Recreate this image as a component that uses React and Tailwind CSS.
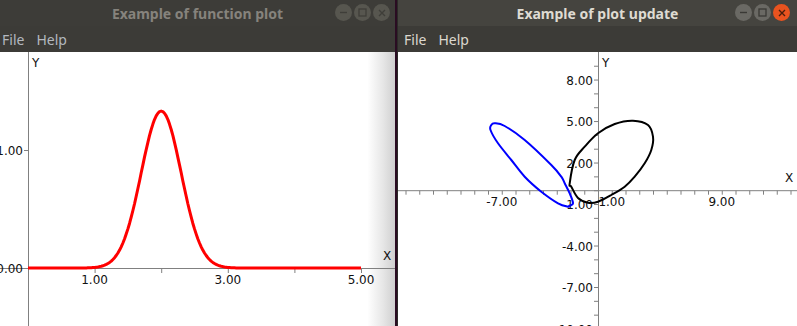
import React from 'react';

// closed Catmull-Rom spline through the given points
const smoothPath = (pts) => {
    const n = pts.length;
    let d = `M${pts[0][0]},${pts[0][1]}`;
    for (let i = 0; i < n; i++) {
        const p0 = pts[(i - 1 + n) % n];
        const p1 = pts[i];
        const p2 = pts[(i + 1) % n];
        const p3 = pts[(i + 2) % n];
        const c1 = [p1[0] + (p2[0] - p0[0]) / 6, p1[1] + (p2[1] - p0[1]) / 6];
        const c2 = [p2[0] - (p3[0] - p1[0]) / 6, p2[1] - (p3[1] - p1[1]) / 6];
        d += ` C${c1[0].toFixed(1)},${c1[1].toFixed(1)} ${c2[0].toFixed(1)},${c2[1].toFixed(1)} ${p2[0]},${p2[1]}`;
    }
    return d + 'Z';
};

const blackLoop = [
    [171.7, 131.3], [176.7, 108], [186.7, 94.7], [200, 81.3], [216.7, 72], [235, 68.7],
    [250, 73], [255, 84.7], [253.3, 98], [246.7, 111.3], [236.7, 124.7], [226.7, 134.7],
    [213.3, 143], [200, 149.7], [190, 150.7], [180, 146], [173.3, 134.7],
];

const blueLoop = [
    [171, 154], [175, 151.3], [171.7, 141.3], [166.7, 131.3], [163.3, 124.7], [153.3, 113],
    [126.7, 88], [106.7, 74], [96.7, 71.3], [93.3, 73], [92.5, 78], [100, 91.3],
    [113.3, 108], [126.7, 124.7], [143.3, 139.7], [160, 151.3], [170, 154.7],
];

const WindowButtons = ({ active }) => {
    const grey = active ? 'bg-[#6a6964]' : 'bg-[#57564f]';
    const glyph = active ? '#3a3935' : '#3f3e39';
    return (
        <div className="flex items-center gap-[2px]">
            <div className={`w-[17px] h-[17px] rounded-full ${grey} flex items-center justify-center`}>
                <svg width="9" height="9" viewBox="0 0 9 9"><line x1="1" y1="4.5" x2="8" y2="4.5" stroke={glyph} strokeWidth="1.4" /></svg>
            </div>
            <div className={`w-[17px] h-[17px] rounded-full ${grey} flex items-center justify-center`}>
                <svg width="9" height="9" viewBox="0 0 9 9"><rect x="1" y="1" width="7" height="7" fill="none" stroke={glyph} strokeWidth="1.3" /></svg>
            </div>
            <div className={`w-[17px] h-[17px] rounded-full ${active ? 'bg-[#e9531f]' : grey} flex items-center justify-center`}>
                <svg width="8" height="8" viewBox="0 0 8 8">
                    <path d="M1 1L7 7M7 1L1 7" stroke={active ? '#4a1d0b' : glyph} strokeWidth="1.4" />
                </svg>
            </div>
        </div>
    );
};

const TitleBar = ({ title, active, padRight }) => (
    <div className={`relative h-[26px] flex items-center justify-center ${active ? 'bg-[#45443f]' : 'bg-[#3d3c38]'}`}>
        <span
            className={`text-[14px] font-bold ${active ? 'text-[#dfdbd2]' : 'text-[#86837d]'}`}
            style={{ fontFamily: '"Noto Sans", sans-serif' }}
        >
            {title}
        </span>
        <div className={`absolute top-[4px] ${padRight}`}>
            <WindowButtons active={active} />
        </div>
    </div>
);

const MenuBar = ({ active, padLeft }) => (
    <div
        className={`h-[26px] flex items-center gap-[12px] text-[14px] bg-[#3c3b37] ${padLeft} ${active ? 'text-[#dcd8cf]' : 'text-[#b3b8bf]'}`}
        style={{ fontFamily: '"Noto Sans", sans-serif' }}
    >
        <span>File</span>
        <span>Help</span>
    </div>
);

const FunctionPlot = () => {
    const pts = [];
    for (let i = 0; i <= 200; i++) {
        const x = (i / 200) * 5;
        const f = Math.exp(-((x - 2) ** 2) / (2 * 0.09)) / (0.3 * Math.sqrt(2 * Math.PI));
        pts.push(`${(28 + x * 66.6).toFixed(1)},${(216 - f * 118).toFixed(1)}`);
    }
    const xTicks = [1, 2, 3, 4, 5];
    return (
        <svg width="395" height="274" className="block" style={{ fontFamily: '"DejaVu Sans", sans-serif' }}>
            <line x1="28.5" y1="0" x2="28.5" y2="274" stroke="#808080" />
            <line x1="0" y1="216.5" x2="395" y2="216.5" stroke="#808080" />
            {xTicks.map((t) => (
                <line key={t} x1={28.5 + t * 66.6} y1="216" x2={28.5 + t * 66.6} y2="221" stroke="#808080" />
            ))}
            <line x1="24" y1="98.5" x2="28" y2="98.5" stroke="#808080" />
            <line x1="24" y1="216.5" x2="28" y2="216.5" stroke="#808080" />
            <text x="23" y="103" fontSize="12" textAnchor="end" fill="#111">1.00</text>
            <text x="23" y="221" fontSize="12" textAnchor="end" fill="#111">0.00</text>
            {[1, 3, 5].map((t) => (
                <text key={t} x={28 + t * 66.6} y="232" fontSize="12" textAnchor="middle" fill="#111">{t}.00</text>
            ))}
            <text x="32" y="15" fontSize="12" fill="#111">Y</text>
            <text x="383" y="208" fontSize="12" fill="#111">X</text>
            <polyline points={pts.join(' ')} fill="none" stroke="#ff0000" strokeWidth="3" strokeLinejoin="round" />
        </svg>
    );
};

const UpdatePlot = () => {
    const ax = 200;
    const ay = 138.7;
    const sx = 13.75;
    const sy = 13.83;
    const xTicks = [];
    for (let v = -14; v <= 14; v++) xTicks.push(v);
    const yTicks = [];
    for (let v = -10; v <= 9; v++) yTicks.push(v);
    return (
        <svg width="400" height="274" className="block" style={{ fontFamily: '"DejaVu Sans", sans-serif' }}>
            <line x1={ax + 0.5} y1="0" x2={ax + 0.5} y2="274" stroke="#808080" />
            <line x1="0" y1={ay} x2="400" y2={ay} stroke="#808080" />
            {xTicks.map((v) => (
                <line key={v} x1={ax + 0.5 + v * sx} y1={ay} x2={ax + 0.5 + v * sx} y2={ay + 4} stroke="#808080" />
            ))}
            {yTicks.map((v) => (
                <line key={v} x1={ax - 4} y1={ay - v * sy} x2={ax} y2={ay - v * sy} stroke="#808080" />
            ))}
            {[8, 5, 2, -1, -4, -7, -10].map((v) => (
                <text key={v} x={ax - 5} y={ay - v * sy + 4.5} fontSize="12" textAnchor="end" fill="#111">
                    {v.toFixed(2)}
                </text>
            ))}
            {[-7, 1, 9].map((v) => (
                <text key={v} x={ax + v * sx} y="154" fontSize="12" textAnchor="middle" fill="#111">
                    {v.toFixed(2)}
                </text>
            ))}
            <text x="204" y="15" fontSize="12" fill="#111">Y</text>
            <text x="387" y="130" fontSize="12" fill="#111">X</text>
            <path d={smoothPath(blueLoop)} fill="none" stroke="#0000ff" strokeWidth="2" strokeLinejoin="round" />
            <path d={smoothPath(blackLoop)} fill="none" stroke="#000000" strokeWidth="2" strokeLinejoin="round" />
        </svg>
    );
};

export default function App() {
    return (
        <div className="w-[797px] h-[326px] overflow-hidden flex bg-[#2a0c22]">
            <div className="w-[395px] flex flex-col shrink-0">
                <TitleBar title="Example of function plot" active={false} padRight="right-[5px]" />
                <MenuBar active={false} padLeft="pl-[2px]" />
                <div className="flex-1 bg-[linear-gradient(to_right,#ffffff_0%,#ffffff_93%,#e6e6e6_97%,#cfcfcf_100%)]">
                    <FunctionPlot />
                </div>
            </div>
            <div className="w-[2px] shrink-0 bg-[#2a0c22]" />
            <div className="w-[400px] flex flex-col shrink-0 border-l border-[#2b2a27]">
                <TitleBar title="Example of plot update" active padRight="right-[7px]" />
                <MenuBar active padLeft="pl-[6px]" />
                <div className="flex-1 bg-white">
                    <UpdatePlot />
                </div>
            </div>
        </div>
    );
}
